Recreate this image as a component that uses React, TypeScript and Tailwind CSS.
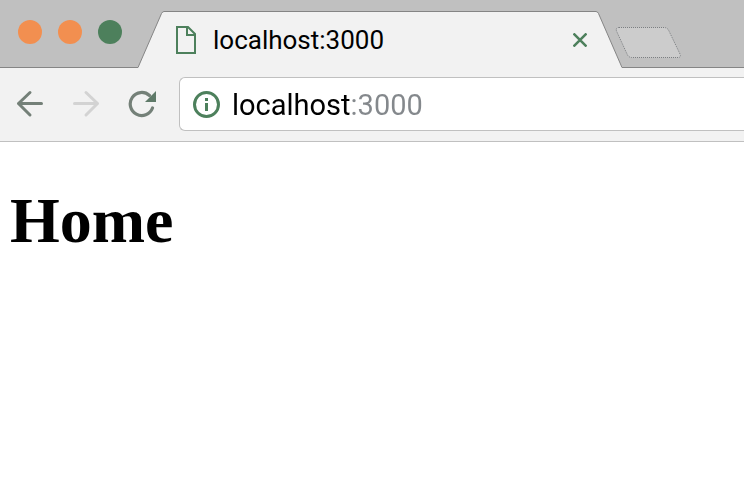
import React from "react";

function WindowControls() {
  return (
    <div className="flex shrink-0 gap-4 pt-5 pl-[18px]">
      <button type="button" aria-label="Close window" className="size-6 rounded-full bg-[#f28f50]" />
      <button type="button" aria-label="Minimize window" className="size-6 rounded-full bg-[#f28f50]" />
      <button type="button" aria-label="Zoom window" className="size-6 rounded-full bg-[#4d805c]" />
    </div>
  );
}

function Tab() {
  return (
    <div className="ml-4 flex h-[57px] w-[484px] shrink-0">
      <svg aria-hidden="true" className="h-[57px] w-[26px] shrink-0" viewBox="0 0 26 57" fill="none">
        <path d="M0 57V56.5L23.5 2.5Q24.5.5 26 .5V57Z" fill="#f2f2f2" />
        <path d="M0 56.5L23.5 2.5Q24.5.5 26 .5" stroke="#858585" />
      </svg>
      <div className="flex min-w-0 flex-1 items-center border-t border-[#858585] bg-[#f2f2f2] pr-2 pl-3">
        <svg aria-hidden="true" className="h-7 w-5 shrink-0" viewBox="0 0 20 28" fill="none" stroke="#4d805c" strokeWidth="2">
          <path d="M1 1H12L19 8V27H1Z" />
          <path d="M11 1V9H19" />
        </svg>
        <span className="ml-[17px] min-w-0 flex-1 truncate text-[26px] leading-8 text-black">localhost:3000</span>
        <button type="button" aria-label="Close tab" className="flex size-4 items-center justify-center">
          <svg aria-hidden="true" className="size-[14px]" viewBox="0 0 14 14" fill="none" stroke="#4d805c" strokeWidth="2.5">
            <path d="M.5.5L13.5 13.5M13.5.5L.5 13.5" />
          </svg>
        </button>
      </div>
      <svg aria-hidden="true" className="h-[57px] w-[26px] shrink-0" viewBox="0 0 26 57" fill="none">
        <path d="M0 .5Q1.5.5 2.5 2.5L26 56.5V57H0Z" fill="#f2f2f2" />
        <path d="M0 .5Q1.5.5 2.5 2.5L26 56.5" stroke="#858585" />
      </svg>
    </div>
  );
}

function NavIcons() {
  return (
    <div className="flex shrink-0 items-center gap-7">
      <button type="button" aria-label="Back" className="flex size-7 items-center justify-center">
        <svg aria-hidden="true" className="size-7" viewBox="0 0 28 28" fill="none" stroke="#748078" strokeWidth="3" strokeLinecap="round" strokeLinejoin="round">
          <path d="M14 2.5L2.5 13.5L14 25" />
          <path d="M3 13.5H25.5" />
        </svg>
      </button>
      <button type="button" aria-label="Forward" className="flex size-7 items-center justify-center">
        <svg aria-hidden="true" className="size-7" viewBox="0 0 28 28" fill="none" stroke="#d3d3d3" strokeWidth="3" strokeLinecap="round" strokeLinejoin="round">
          <path d="M14 2.5L25.5 13.5L14 25" />
          <path d="M2.5 13.5H25" />
        </svg>
      </button>
      <button type="button" aria-label="Reload" className="flex size-7 items-center justify-center">
        <svg aria-hidden="true" className="size-7" viewBox="0 0 28 28" fill="none">
          <path d="M24.500 18A11.500 11.500 0 1 1 21.500 5.500" stroke="#748078" strokeWidth="3.200" strokeLinecap="round" />
          <path d="M28 1V12H17Z" fill="#5f7a69" />
        </svg>
      </button>
    </div>
  );
}

export default function App() {
  return (
    <div className="min-h-screen overflow-hidden bg-white font-[Roboto,sans-serif]">
      <header>
        <div className="flex h-[68px] overflow-hidden bg-[#c0c0c0] shadow-[inset_0_-1px_0_#858585]">
          <WindowControls />
          <div className="flex pt-[11px]">
            <Tab />
            <button type="button" aria-label="New tab" className="mt-4 -ml-[7px] h-8 w-[67px] shrink-0">
              <svg aria-hidden="true" className="h-8 w-[67px]" viewBox="0 0 67 32" fill="none">
                <path d="M4 .5H49Q52 .5 53.500 3L65 27Q66.500 30.500 63 30.500H17Q14 30.500 12.500 28L1.500 4Q.5 .5 4 .5Z" fill="#cccccc" stroke="#7c7f82" strokeDasharray="1 1" />
              </svg>
            </button>
          </div>
        </div>
        <div className="flex h-[74px] items-center border-b border-[#c0c0c0] bg-[#f2f2f2] pb-0.5 pl-4">
          <NavIcons />
          <div className="ml-[23px] flex h-[54px] min-w-0 flex-1 items-center rounded-l-md border border-r-0 border-[#c0c0c0] bg-white pl-3">
            <svg aria-hidden="true" className="size-7 shrink-0" viewBox="0 0 28 28" fill="none">
              <circle cx="14.500" cy="14.500" r="12" stroke="#4d805c" strokeWidth="3" />
              <path d="M13 8H16V11H13ZM13 13H16V21H13Z" fill="#4d805c" />
            </svg>
            <input
              type="text"
              aria-label="Address"
              defaultValue="localhost:3000"
              spellCheck={false}
              className="ml-3 h-10 min-w-0 flex-1 bg-[linear-gradient(to_right,#000_118px,#84888c_118px)] bg-clip-text pt-1 text-[29px] text-transparent caret-black outline-none"
            />
          </div>
        </div>
      </header>
      <main className="px-[10px] pt-[43px]">
        <h1 className="font-['Liberation_Serif',serif] text-[64px] leading-[72px] font-bold text-black">Home</h1>
      </main>
    </div>
  );
}
